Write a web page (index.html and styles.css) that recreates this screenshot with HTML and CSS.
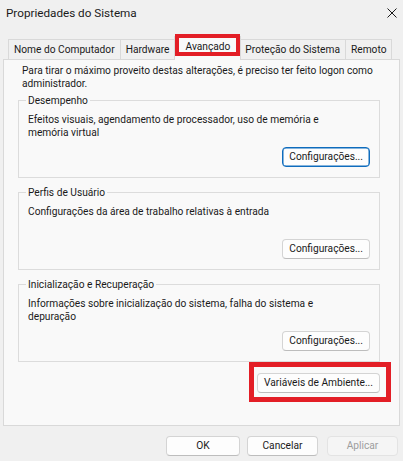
FILE: index.html
```html
<!DOCTYPE html>
<html lang="pt-BR">
<head>
<meta charset="utf-8">
<title>Propriedades do Sistema</title>
<link rel="stylesheet" href="styles.css">
</head>
<body>
<div class="dialog">
  <div class="titlebar">
    <span class="title">Propriedades do Sistema</span>
    <svg class="close" width="10" height="10" viewBox="0 0 10 10" aria-hidden="true">
      <path d="M0.5 0.5 L9.5 9.5 M9.5 0.5 L0.5 9.5" stroke="#1a1a1a" stroke-width="1" fill="none"/>
    </svg>
  </div>
  <div class="tabs">
    <div class="tab">Nome do Computador</div>
    <div class="tab">Hardware</div>
    <div class="tab active">Avançado</div>
    <div class="tab">Proteção do Sistema</div>
    <div class="tab">Remoto</div>
  </div>
  <div class="panel">
    <p class="intro">Para tirar o máximo proveito destas alterações, é preciso ter feito logon como<br>administrador.</p>
    <fieldset class="group">
      <legend>Desempenho</legend>
      <div class="group-body">
        <p>Efeitos visuais, agendamento de processador, uso de memória e<br>memória virtual</p>
        <button class="btn focused">Configurações...</button>
      </div>
    </fieldset>
    <fieldset class="group">
      <legend>Perfis de Usuário</legend>
      <div class="group-body">
        <p>Configurações da área de trabalho relativas à entrada</p>
        <button class="btn">Configurações...</button>
      </div>
    </fieldset>
    <fieldset class="group">
      <legend>Inicialização e Recuperação</legend>
      <div class="group-body">
        <p>Informações sobre inicialização do sistema, falha do sistema e<br>depuração</p>
        <button class="btn">Configurações...</button>
      </div>
    </fieldset>
    <div class="env-row">
      <button class="btn marked">Variáveis de Ambiente...</button>
    </div>
  </div>
  <div class="footer">
    <button class="btn wide">OK</button>
    <button class="btn">Cancelar</button>
    <button class="btn disabled" disabled>Aplicar</button>
  </div>
</div>
</body>
</html>
```
FILE: styles.css
```css
* { box-sizing: border-box; }

html, body {
  margin: 0;
  padding: 0;
  background: #f0f0f0;
}

body {
  font-family: Roboto, "Segoe UI", "Liberation Sans", sans-serif;
  font-size: 10.2px;
  color: #1a1a1a;
}

.dialog {
  width: 403px;
  height: 461px;
  background: #f0f0f0;
  overflow: hidden;
}

.titlebar {
  height: 26px;
  display: flex;
  align-items: center;
  justify-content: space-between;
  padding: 0 6px 0 6px;
}

.title {
  font-size: 11.7px;
  color: #1a1a1a;
}

.close {
  display: block;
}

.tabs {
  display: flex;
  align-items: flex-end;
  height: 21px;
  margin-top: 13px;
  margin-bottom: -1px;
  padding-left: 8px;
  position: relative;
  z-index: 1;
}

.tab {
  height: 20px;
  margin-bottom: 1px;
  padding: 0 5px;
  display: flex;
  align-items: center;
  border: 1px solid #d9d9d9;
  border-bottom: none;
  background: #f0f0f0;
  margin-right: -1px;
  white-space: nowrap;
  position: relative;
}

.tab.active {
  height: 24px;
  margin-bottom: 0;
  margin-left: -1px;
  margin-right: -2px;
  padding: 0 10px 4px 11px;
  background: #f9f9f9;
  z-index: 2;
}

.tab.active::after {
  content: "";
  position: absolute;
  left: 0;
  right: 0;
  top: -3px;
  bottom: 4px;
  border: 4px solid #e31e26;
}

.panel {
  height: 367px;
  margin: 0 3px;
  border: 1px solid #d9d9d9;
  background: #f9f9f9;
  padding: 4px 19px 0 14px;
}

.intro {
  margin: 0 0 4px 4px;
  line-height: 13px;
}

.group {
  margin: 0 0 8px 0;
  padding: 0 9px;
  border: 1px solid #dcdcdc;
  min-width: 0;
}

.group legend {
  padding: 0 2px;
  margin-left: -2px;
  line-height: 13px;
}

.group-body {
  height: 70px;
  padding: 6px 0 10px 0;
  display: flex;
  flex-direction: column;
}

.group-body p {
  margin: 0;
  line-height: 13px;
}

.group-body .btn {
  margin-top: auto;
  align-self: flex-end;
}

.btn {
  font-family: inherit;
  font-size: 10.2px;
  color: #1a1a1a;
  height: 20px;
  min-width: 71px;
  padding: 0 6px;
  background: #fdfdfd;
  border: 1px solid #d4d4d4;
  border-bottom-color: #bdbdbd;
  border-radius: 4px;
  line-height: 18px;
  position: relative;
}

.btn.focused {
  border: 1px solid #0f6cbd;
  box-shadow: inset 0 0 0 0.5px #0f6cbd;
}

.btn.wide {
  min-width: 74px;
}

.btn.disabled {
  color: #9d9d9d;
  background: #f5f5f5;
  border-color: #e3e3e3;
}

.env-row {
  display: flex;
  justify-content: flex-end;
  margin-top: 11px;
}

.btn.marked::after {
  content: "";
  position: absolute;
  top: -12px;
  bottom: -10px;
  left: -9px;
  right: -12px;
  border: 5px solid #e31e26;
}

.footer {
  display: flex;
  justify-content: flex-end;
  gap: 7px;
  padding: 10px 5px 0 0;
}

.footer .btn.disabled {
  margin-left: 2px;
}
```
